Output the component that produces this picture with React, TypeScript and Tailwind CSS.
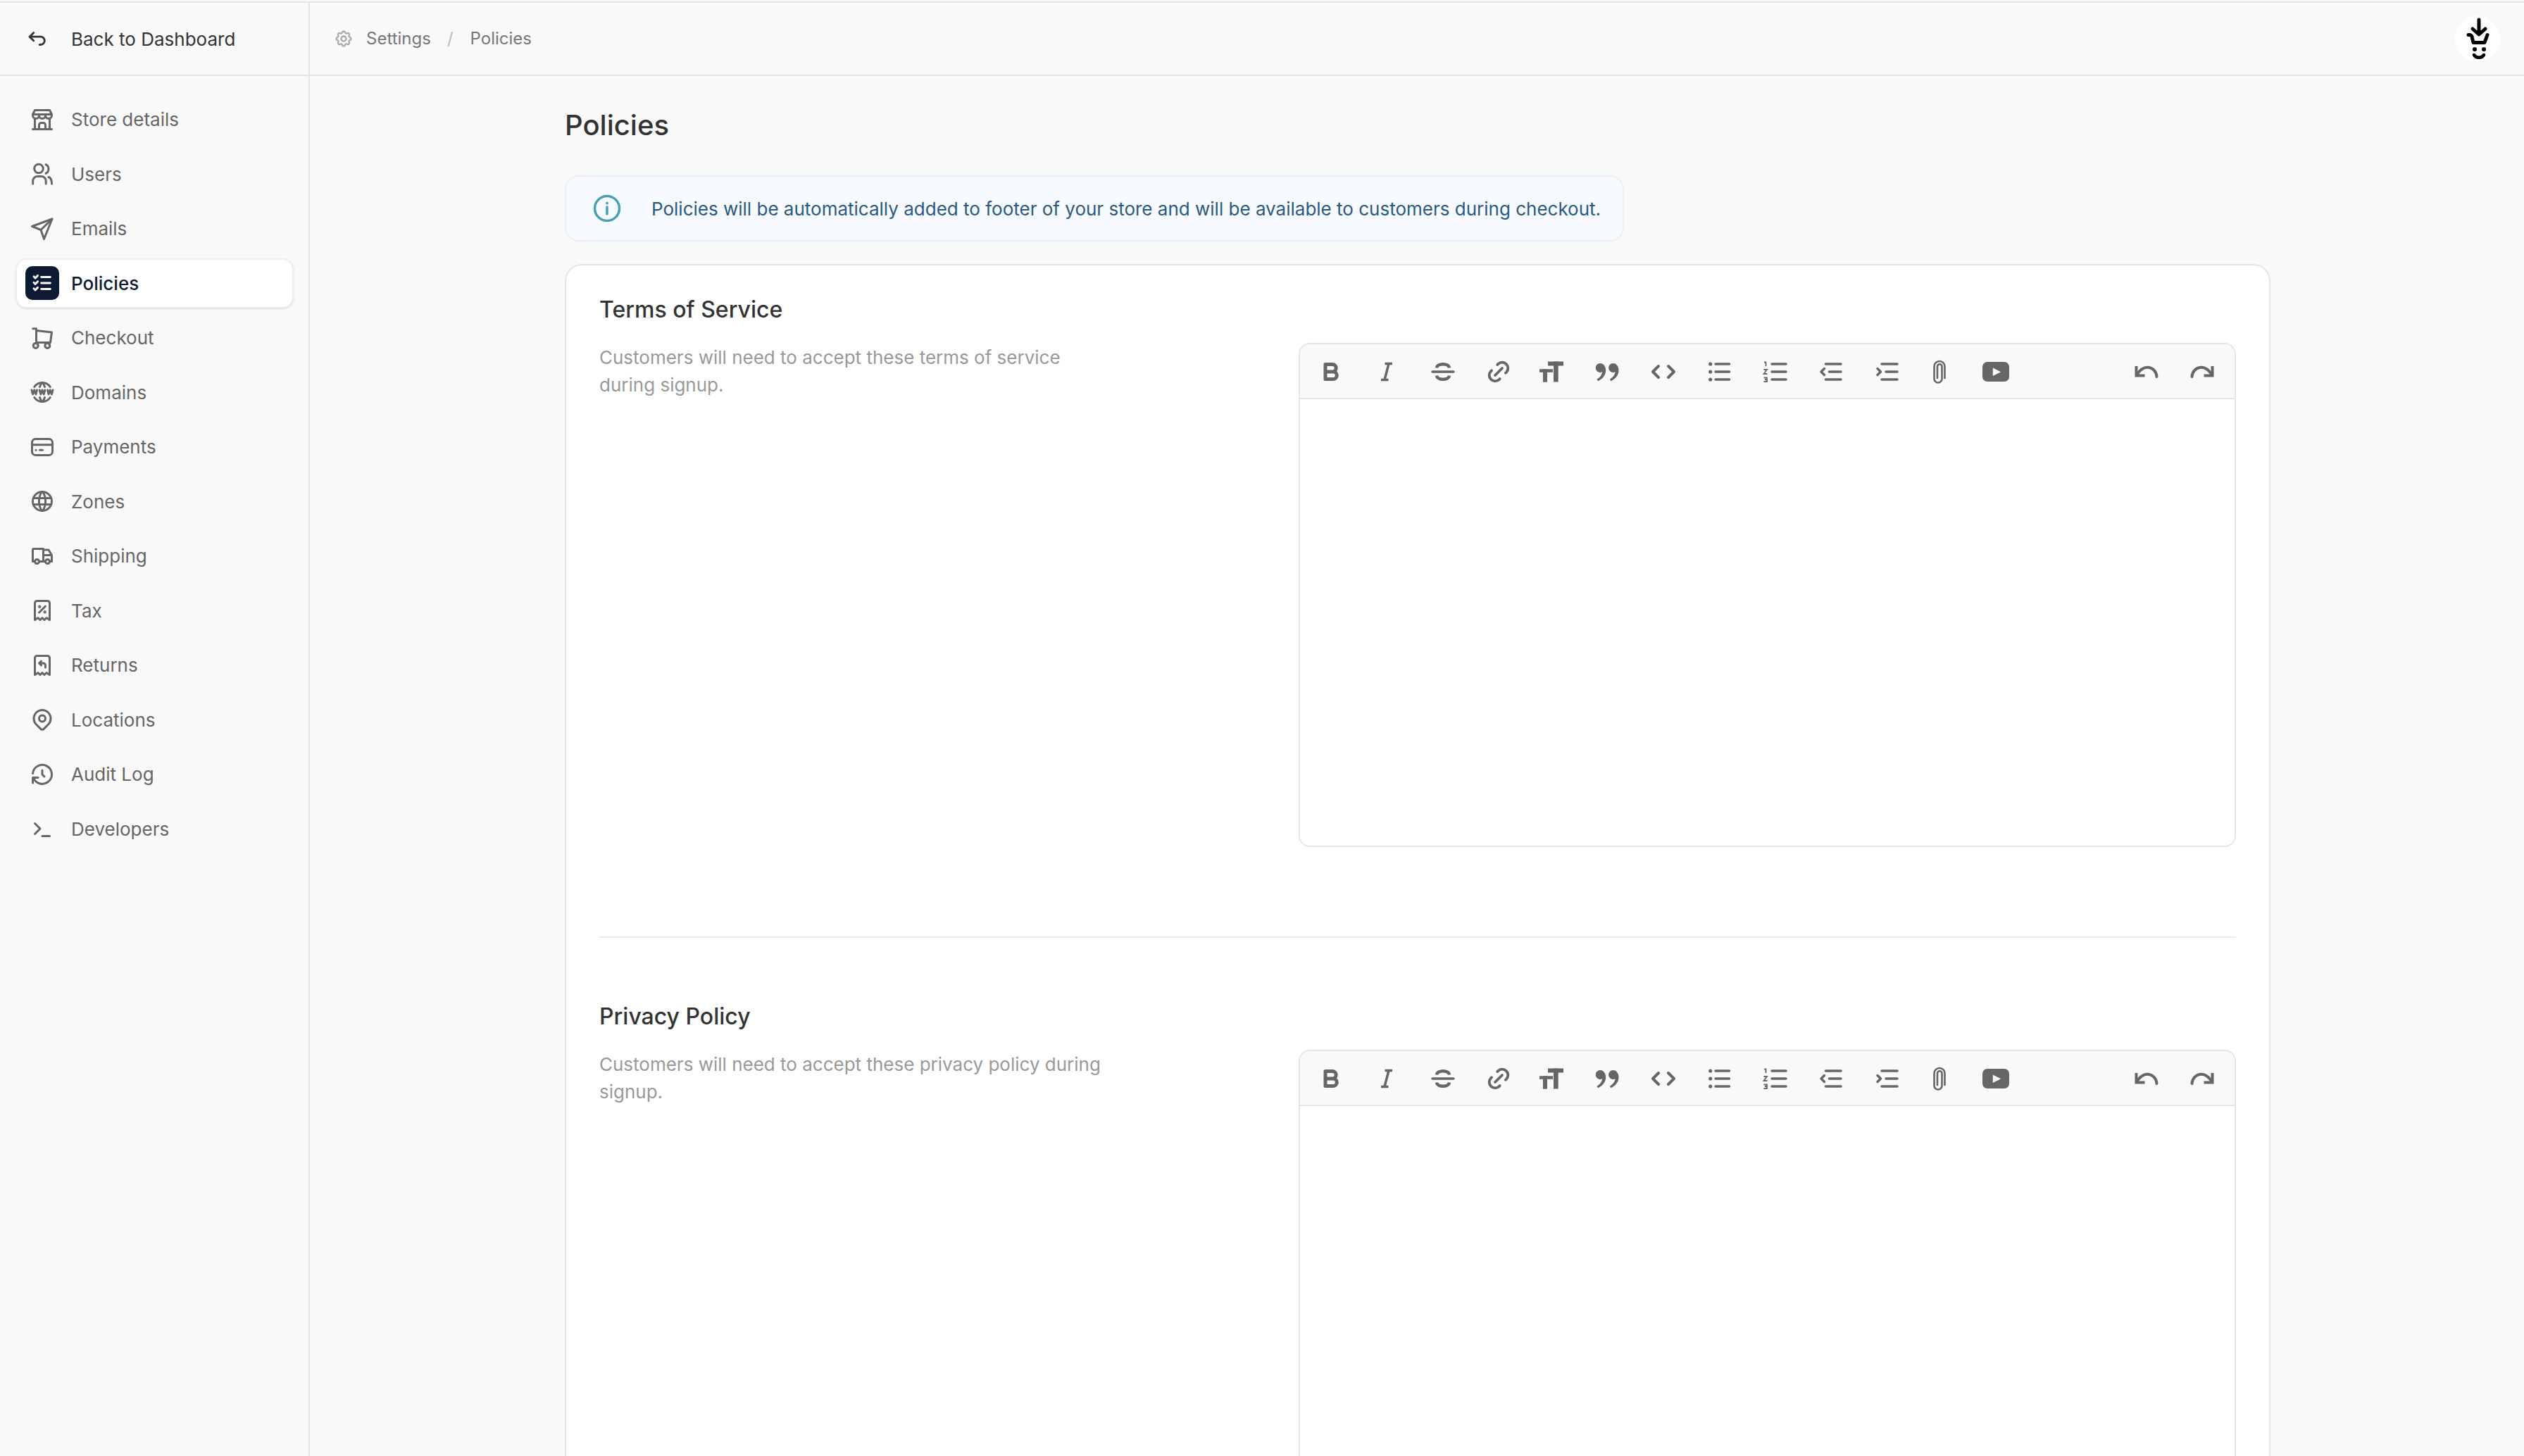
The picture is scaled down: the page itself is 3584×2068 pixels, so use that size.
import type { ReactNode } from "react";
import { RiDoubleQuotesR } from "react-icons/ri";
import {
  TbArrowBackUp,
  TbBuildingStore,
  TbHistory,
  TbLink,
  TbListCheck,
  TbMapPin,
  TbReceiptRefund,
  TbReceiptTax,
  TbSettings,
  TbTerminal,
  TbTruck,
  TbWorld,
  TbWorldWww,
} from "react-icons/tb";

function NavSvg({ children }: { children: ReactNode }) {
  return (
    <svg width="36" height="36" viewBox="0 0 36 36" fill="none" stroke="currentColor" strokeWidth="3" strokeLinecap="round" strokeLinejoin="round">
      {children}
    </svg>
  );
}

function UsersIcon() {
  return (
    <NavSvg>
      <circle cx="13" cy="10.5" r="6.3" />
      <path d="M23 4.7 a7 7 0 0 1 0 12.6" />
      <path d="M4.7 32 V28 a6.5 6.5 0 0 1 6.5-6.5 h5.5 a6.5 6.5 0 0 1 6.5 6.5 V32" />
      <path d="M27 22.5 C29.8 23.5 31.5 27 31.5 32" />
    </NavSvg>
  );
}

function SendIcon() {
  return (
    <NavSvg>
      <path d="M32 4 L3.5 14.5 L16 19.5 L20.5 32.5 Z" />
      <path d="M32 4 L16 19.5" />
    </NavSvg>
  );
}

function CartIcon() {
  return (
    <NavSvg>
      <path d="M4.7 4.7 H9.5 V24.5 H29.5 L31.5 10 L9.5 7.5" />
      <circle cx="8.7" cy="29" r="3.5" />
      <circle cx="25.3" cy="29" r="3.5" />
    </NavSvg>
  );
}

function CardIcon() {
  return (
    <NavSvg>
      <rect x="3.5" y="6.5" width="29" height="23" rx="5" />
      <path d="M3.5 14.7 H32.5" />
      <path d="M9 22.3 H9.1 M14.5 22.3 H18.5" />
    </NavSvg>
  );
}

const navItems = [
  { label: "Store details", icon: <TbBuildingStore size={36} /> },
  { label: "Users", icon: <UsersIcon /> },
  { label: "Emails", icon: <SendIcon /> },
  { label: "Policies", icon: <TbListCheck size={34} />, active: true },
  { label: "Checkout", icon: <CartIcon /> },
  { label: "Domains", icon: <TbWorldWww size={36} /> },
  { label: "Payments", icon: <CardIcon /> },
  { label: "Zones", icon: <TbWorld size={36} /> },
  { label: "Shipping", icon: <TbTruck size={36} /> },
  { label: "Tax", icon: <TbReceiptTax size={36} /> },
  { label: "Returns", icon: <TbReceiptRefund size={36} /> },
  { label: "Locations", icon: <TbMapPin size={36} /> },
  { label: "Audit Log", icon: <TbHistory size={36} /> },
  { label: "Developers", icon: <TbTerminal size={36} /> },
];

// toolbar icons are all drawn on a 48 box
function ToolSvg({ children, width = 4 }: { children: ReactNode; width?: number }) {
  return (
    <svg width="48" height="48" viewBox="0 0 48 48" fill="none" stroke="#666666" strokeWidth={width} strokeLinecap="round" strokeLinejoin="round">
      {children}
    </svg>
  );
}

const toolbarIcons: { key: string; icon: ReactNode; gap: string }[] = [
  {
    key: "bold",
    gap: "mr-[31.5px]",
    icon: (
      <ToolSvg width={5}>
        <path d="M16 13.5 V34.5 H27 a5.3 5.3 0 0 0 0-10.6 H16 M16 23.9 H26 a5.2 5.2 0 0 0 0-10.4 H16" />
      </ToolSvg>
    ),
  },
  {
    key: "italic",
    gap: "mr-[31.5px]",
    icon: (
      <ToolSvg width={3.5}>
        <path d="M21.5 12.5 H32 M16 35.5 H26.5 M27 12.5 L21 35.5" strokeLinecap="butt" />
      </ToolSvg>
    ),
  },
  {
    key: "strike",
    gap: "mr-[31.5px]",
    icon: (
      <ToolSvg width={4.5}>
        <path d="M9 24 H39" strokeWidth={3.5} />
        <path d="M15 18.5 C16 11.5 32 11.5 33 18.5" strokeLinecap="butt" />
        <path d="M15 29.5 C16 36.5 32 36.5 33 29.5" strokeLinecap="butt" />
      </ToolSvg>
    ),
  },
  {
    key: "link",
    gap: "mr-[26.5px]",
    icon: <TbLink size={40} strokeWidth={2.3} className="text-[#666666]" />,
  },
  {
    key: "size",
    gap: "mr-[31.5px]",
    icon: (
      <svg width="48" height="48" viewBox="0 0 48 48" fill="#666666">
        <rect x="19" y="9.5" width="22" height="6" />
        <rect x="27" y="9.5" width="6.7" height="29" />
        <rect x="7" y="20.3" width="19" height="4.5" />
        <rect x="12" y="20.3" width="6" height="18.4" />
      </svg>
    ),
  },
  {
    key: "quote",
    gap: "mr-[31.5px]",
    icon: <RiDoubleQuotesR size={44} className="text-[#666666]" />,
  },
  {
    key: "code",
    gap: "mr-[31.5px]",
    icon: (
      <ToolSvg>
        <path d="M17 16 L9 24 L17 32 M31 16 L39 24 L31 32" />
      </ToolSvg>
    ),
  },
  {
    key: "bullets",
    gap: "mr-[31.5px]",
    icon: (
      <ToolSvg width={3.5}>
        <path d="M19 13 H38.5 M19 24 H38.5 M19 35 H38.5" />
        <circle cx="11.7" cy="13" r="2.6" fill="#666666" stroke="none" />
        <circle cx="11.7" cy="24" r="2.6" fill="#666666" stroke="none" />
        <circle cx="11.7" cy="35" r="2.6" fill="#666666" stroke="none" />
      </ToolSvg>
    ),
  },
  {
    key: "numbers",
    gap: "mr-[31.5px]",
    icon: (
      <ToolSvg width={3.5}>
        <path d="M19 13 H39 M19 24 H39 M19 35 H39" />
        <path
          d="M8 10.5 H10.5 V16 M7.5 21 H12 L7.5 27 H12.5 M7.5 32.5 H12 V38 H7.5 M9 35 H12"
          strokeWidth={1.8}
          strokeLinecap="butt"
          strokeLinejoin="miter"
        />
      </ToolSvg>
    ),
  },
  {
    key: "outdent",
    gap: "mr-[31.5px]",
    icon: (
      <ToolSvg width={3.5}>
        <path d="M16.5 13 H38 M21.5 24 H38 M16.5 35 H38" />
        <path d="M14.5 19.5 L10 24 L14.5 28.5" />
      </ToolSvg>
    ),
  },
  {
    key: "indent",
    gap: "mr-[26.5px]",
    icon: (
      <ToolSvg width={3.5}>
        <path d="M16 13 H38 M22 24 H38 M16 35 H38" />
        <path d="M10 19.5 L14.5 24 L10 28.5" />
      </ToolSvg>
    ),
  },
  {
    key: "attach",
    gap: "mr-[31.5px]",
    icon: (
      <ToolSvg width={2.6}>
        <path d="M31.5 33 V16.5 a7.5 7.5 0 0 0 -15 0 V34 a5.5 5.5 0 0 0 11 0 V16.5 a3.25 3.25 0 0 0 -6.5 0 V33" />
      </ToolSvg>
    ),
  },
  {
    key: "video",
    gap: "",
    icon: (
      <svg width="48" height="48" viewBox="0 0 48 48">
        <rect x="5" y="10" width="38" height="28" rx="7" fill="#666666" />
        <path d="M19.8 18.5 L31.2 24.2 L19.8 30 Z" fill="#f9f9f9" />
      </svg>
    ),
  },
];

function UndoIcon({ flip }: { flip?: boolean }) {
  return (
    <span className={flip ? "-scale-x-100" : ""}>
      <ToolSvg>
        <path d="M9.5 16 V29.5 H21.5" strokeLinecap="butt" strokeLinejoin="miter" />
        <path d="M10 28.5 C15.5 20 21.5 17.5 26 17.8 C33 18.3 38 24 38.5 31" />
      </ToolSvg>
    </span>
  );
}

function Logo() {
  return (
    <svg width="64" height="64" viewBox="0 0 64 64">
      <circle cx="32" cy="32" r="32" fill="#ffffff" />
      <path d="M34 5 V25 M25 18 L34 26 L43 18" fill="none" stroke="#000000" strokeWidth="5" strokeLinecap="round" strokeLinejoin="round" />
      <path d="M19 26.5 H21 C23 26.5 24 28 24.5 31 L26 37.5 H42 L46 26.5" fill="none" stroke="#000000" strokeWidth="5" strokeLinecap="round" strokeLinejoin="round" />
      <circle cx="28" cy="47" r="3" fill="#000000" />
      <circle cx="41" cy="47" r="3" fill="#000000" />
      <path d="M27 55 C30 60 38 60 41 55" fill="none" stroke="#000000" strokeWidth="4.5" strokeLinecap="round" />
    </svg>
  );
}

function Toolbar() {
  return (
    <div className="flex h-[78px] items-center justify-between border-b-2 border-[#e5e5e5] bg-[#f9f9f9] pl-[19.5px] pr-[22px] pt-[2px]">
      <div className="flex items-center">
        {toolbarIcons.map((tool) => (
          <span className={`flex h-[48px] w-[48px] items-center justify-center ${tool.gap}`} key={tool.key}>
            {tool.icon}
          </span>
        ))}
      </div>
      <div className="flex items-center gap-[31px]">
        <UndoIcon />
        <UndoIcon flip />
      </div>
    </div>
  );
}

function PolicySection({ title, description }: { title: string; description: string }) {
  return (
    <section>
      <h2 className="text-[32px] leading-[44px] font-medium text-[#333333]">{title}</h2>
      <div className="mt-[25px] flex justify-between">
        <p className="w-[730px] pt-[1px] text-[26px] leading-[39px] text-[#999999]">{description}</p>
        <div className="w-[1331px] overflow-hidden rounded-[16px] border-2 border-[#e5e5e5]">
          <Toolbar />
          <div className="h-[634px] bg-white" />
        </div>
      </div>
    </section>
  );
}

export default function App() {
  return (
    <div className="h-[2068px] w-full overflow-hidden bg-[#f9f9f9] pt-[2px] font-['Inter',sans-serif]">
      <div className="flex h-full border-t-2 border-[#e5e5e5]">
        <aside className="flex w-[440px] shrink-0 flex-col border-r-2 border-[#e5e5e5]">
          <div className="flex h-[104px] shrink-0 items-center gap-[32px] border-b-2 border-[#e5e5e5] pl-[35px] text-[26px] text-[#333333]">
            <TbArrowBackUp size={34} />
            <span>Back to Dashboard</span>
          </div>
          <nav className="flex flex-col gap-[6px] pl-[22px] pr-[21px] pt-[26px]">
            {navItems.map((item) => (
              <div
                className={`flex h-[71.5px] items-center gap-[17px] rounded-[16px] border-2 pl-[12px] text-[26px] ${
                  item.active
                    ? "border-[#eeeeee] bg-white font-medium text-[#0c1a33] shadow-sm"
                    : "border-transparent text-[#666666]"
                }`}
                key={item.label}
              >
                <span
                  className={`flex h-[48px] w-[48px] items-center justify-center rounded-[10px] ${
                    item.active ? "bg-[#0c1a33] text-white" : ""
                  }`}
                >
                  {item.icon}
                </span>
                <span>{item.label}</span>
              </div>
            ))}
          </nav>
        </aside>

        <div className="flex min-w-0 flex-1 flex-col">
          <header className="flex h-[104px] shrink-0 items-center justify-between border-b-2 border-[#e5e5e5] px-[34px]">
            <div className="flex items-center text-[24px] text-[#777777]">
              <TbSettings size={28} className="text-[#aaaaaa]" />
              <span className="ml-[18px]">Settings</span>
              <span className="ml-[23px] mr-[24px] text-[#bbbbbb]">/</span>
              <span>Policies</span>
            </div>
            <Logo />
          </header>

          <main className="pl-[362px] pt-[42px]">
            <h1 className="text-[40px] leading-[56px] font-medium text-[#333333]">Policies</h1>
            <div className="mt-[43px] flex h-[94px] w-fit items-center gap-[43px] rounded-[20px] border-2 border-[#e8f1f6] bg-[#f7fbff] pl-[38px] pr-[31px]">
              <svg width="40" height="40" viewBox="0 0 40 40" fill="none" stroke="#4a9fb5">
                <circle cx="20" cy="20" r="17.5" strokeWidth="3.5" />
                <path d="M20 18 V28" strokeWidth="3.5" strokeLinecap="round" />
                <circle cx="20" cy="12.5" r="1.5" fill="#4a9fb5" />
              </svg>
              <span className="text-[26px] text-[#2a5a7f]">
                Policies will be automatically added to footer of your store and will be available to customers during checkout.
              </span>
            </div>

            <div className="mt-[32px] flex w-[2422px] flex-col rounded-[24px] border-2 border-[#e5e5e5] bg-white px-[47px] pt-[41px]">
              <PolicySection
                title="Terms of Service"
                description="Customers will need to accept these terms of service during signup."
              />
              <div className="mb-[90px] mt-[127px] h-[2px] bg-[#ebebeb]" />
              <PolicySection
                title="Privacy Policy"
                description="Customers will need to accept these privacy policy during signup."
              />
            </div>
          </main>
        </div>
      </div>
    </div>
  );
}
